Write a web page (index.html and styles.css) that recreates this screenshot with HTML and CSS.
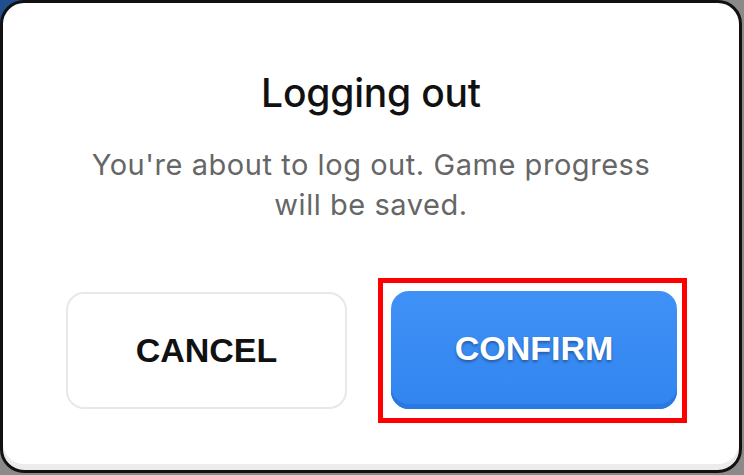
FILE: index.html
```html
<!DOCTYPE html>
<html lang="en">
<head>
    <meta charset="UTF-8">
    <meta name="viewport" content="width=device-width, initial-scale=1.0">
    <title>Logging out</title>
    <link rel="stylesheet" href="styles.css">
</head>
<body>
    <div class="dialog">
        <h1 class="dialog-title">Logging out</h1>
        <p class="dialog-text">You're about to log out. Game progress<br>will be saved.</p>

        <div class="actions">
            <button class="btn btn-cancel">CANCEL</button>
            <div class="highlight">
                <button class="btn btn-confirm">CONFIRM</button>
            </div>
        </div>
    </div>
</body>
</html>
```

FILE: styles.css
```css
html, body {
    margin: 0;
    height: 100%;
}
body {
    background: linear-gradient(135deg, #1f4f8f 0, #1f4f8f 3%, #8a8a8a 3%, #8a8a8a 100%);
    font-family: Inter, "Liberation Sans", Arial, sans-serif;
}
.dialog {
    box-sizing: border-box;
    width: 742px;
    height: 473px;
    background-color: #fff;
    border: 3px solid #111;
    border-radius: 24px;
    box-shadow: inset 0 -6px 0 #ececec;
    padding-top: 66px;
    text-align: center;
}
.dialog-title {
    margin: 0;
    font-size: 39px;
    line-height: 48px;
    font-weight: 500;
    color: #111;
    letter-spacing: -0.2px;
}
.dialog-text {
    margin: 28px 0 0;
    font-size: 29px;
    line-height: 40px;
    letter-spacing: 0.55px;
    color: #666;
}
.actions {
    display: flex;
    align-items: center;
    margin-top: 53px;
    padding-left: 63px;
    gap: 31px;
}
.btn {
    box-sizing: border-box;
    font-family: "Liberation Sans", Arial, sans-serif;
    font-weight: bold;
    font-size: 34px;
    border-radius: 18px;
    cursor: pointer;
}
.btn-cancel {
    width: 281px;
    height: 117px;
    background-color: #fff;
    border: 2px solid #e8e8e8;
    color: #111;
}
.highlight {
    border: 5px solid #f00;
    padding: 8px 5px 9px 8px;
}
.btn-confirm {
    display: block;
    width: 286px;
    height: 118px;
    border: none;
    color: #fff;
    background: linear-gradient(#3f91f6, #3285f0);
    box-shadow: inset 0 -5px 0 #2a78e2;
    text-shadow: 0 2px 3px rgba(0,0,0,0.35);
    padding-bottom: 4px;
}
```
